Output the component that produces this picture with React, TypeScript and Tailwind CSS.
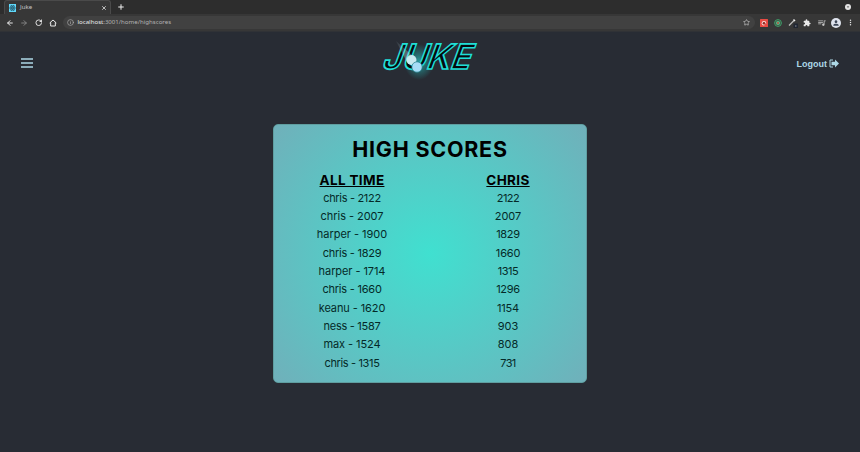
import { ArrowLeft, ArrowRight, Info, Plus, RotateCw, Star, X } from "lucide-react";
import { MdExtension, MdMoreVert, MdQueueMusic, MdPerson, MdArrowDropDown } from "react-icons/md";

type Score = { label: string; tracking: string };

const allTime: Score[] = [
  { label: "chris - 2122", tracking: "tracking-[-0.32px]" },
  { label: "chris - 2007", tracking: "tracking-[-0.05px]" },
  { label: "harper - 1900", tracking: "tracking-[-0.03px]" },
  { label: "chris - 1829", tracking: "tracking-[-0.24px]" },
  { label: "harper - 1714", tracking: "tracking-[-0.08px]" },
  { label: "chris - 1660", tracking: "tracking-[-0.22px]" },
  { label: "keanu - 1620", tracking: "tracking-[-0.1px]" },
  { label: "ness - 1587", tracking: "tracking-[-0.28px]" },
  { label: "max - 1524", tracking: "tracking-[-0.08px]" },
  { label: "chris - 1315", tracking: "tracking-[-0.36px]" },
];

const mine: Score[] = [
  { label: "2122", tracking: "tracking-[-0.5px]" },
  { label: "2007", tracking: "tracking-normal" },
  { label: "1829", tracking: "tracking-[-0.3px]" },
  { label: "1660", tracking: "tracking-[-0.2px]" },
  { label: "1315", tracking: "tracking-[-0.5px]" },
  { label: "1296", tracking: "tracking-[-0.3px]" },
  { label: "1154", tracking: "tracking-[-0.2px]" },
  { label: "903", tracking: "tracking-[-0.1px]" },
  { label: "808", tracking: "tracking-normal" },
  { label: "731", tracking: "tracking-[-0.6px]" },
];

function ReactFavicon() {
  return (
    <svg className="h-[8px] w-[7px] shrink-0" viewBox="0 0 14 16">
      <rect width="14" height="16" fill="#61dafb" />
      <g fill="none" stroke="#24566a" strokeWidth="1.3">
        <ellipse cx="7" cy="8" rx="6" ry="2.4" />
        <ellipse cx="7" cy="8" rx="6" ry="2.4" transform="rotate(60 7 8)" />
        <ellipse cx="7" cy="8" rx="6" ry="2.4" transform="rotate(120 7 8)" />
      </g>
      <circle cx="7" cy="8" r="1.5" fill="#24566a" />
    </svg>
  );
}

function TabStrip() {
  return (
    <div className="flex h-[14px] items-end bg-[#2d2d2d]">
      <div className="ml-[4px] flex h-[14px] w-[107px] items-center rounded-t-[3px] border border-b-0 border-[#4a4a4a] bg-[#373737] pl-[4px] pr-[3px]">
        <ReactFavicon />
        <span className="ml-[4px] flex-1 text-[6.1px] leading-none text-[#c9c9c9]">Juke</span>
        <X className="h-[6px] w-[6px] text-[#e8e8e8]" strokeWidth={3} />
      </div>
      <Plus className="mb-[3px] ml-[6px] h-[8px] w-[8px] text-[#f0f0f0]" strokeWidth={3} />
      <div className="mb-[4px] ml-auto mr-[9px] flex h-[6px] w-[6px] items-center justify-center rounded-full bg-[#e4e4e4]">
        <MdArrowDropDown className="h-[6px] w-[6px] text-[#2d2d2d]" />
      </div>
    </div>
  );
}

function Toolbar() {
  return (
    <div className="flex h-[18px] items-center border-b border-[#303236] bg-[#373737] pl-[6px] pr-[5px] text-[#e8e8e8]">
      <ArrowLeft className="h-[8px] w-[8px]" strokeWidth={3} />
      <ArrowRight className="ml-[6px] h-[8px] w-[8px] text-[#858585]" strokeWidth={2.8} />
      <RotateCw className="ml-[6.5px] h-[7.5px] w-[7.5px]" strokeWidth={3} />
      <svg className="ml-[6.5px] h-[8px] w-[8px]" viewBox="0 0 24 24" fill="none" stroke="currentColor" strokeWidth="3">
        <path d="M2 12 12 3l10 9M5 10v11h14V10" />
      </svg>
      <div className="ml-[6px] flex h-[13px] w-[692px] items-center rounded-full bg-[#414141] pl-[4px] pr-[5px]">
        <Info className="h-[7px] w-[7px] text-[#b0b0b0]" strokeWidth={2.2} />
        <span className="ml-[4px] whitespace-nowrap pb-[0.5px] text-[6.1px] leading-[8px] text-[#b4b4b4]">
          <span className="text-[#ececec]">localhost</span>:3001/home/highscores
        </span>
        <Star className="ml-auto h-[7px] w-[7px] text-[#c4c4c4]" strokeWidth={2.4} />
      </div>
      <svg className="ml-[5px] h-[8px] w-[8px]" viewBox="0 0 16 16">
        <rect width="16" height="16" rx="1" fill="#e84b43" />
        <circle cx="8" cy="8.5" r="4.6" fill="#f6dcda" />
        <circle cx="8" cy="8.5" r="2.6" fill="#8c2822" />
        <path d="M9 9h5v5H9z" fill="#e84b43" />
      </svg>
      <svg className="ml-[6px] h-[8px] w-[8px]" viewBox="0 0 16 16" fill="none" strokeWidth="2">
        <circle cx="8" cy="8" r="6.8" stroke="#3fa36a" />
        <circle cx="8" cy="8" r="3.6" stroke="#58bd88" />
        <circle cx="8" cy="8" r="2" fill="#c8785b" />
      </svg>
      <svg className="ml-[6px] h-[10px] w-[10px]" viewBox="0 0 20 20">
        <path d="M2 15 12 5" stroke="#bdbdbd" strokeWidth="2.3" />
        <path d="m10 4 2-2 3 3-2 2z" fill="#eee" />
        <rect x="11" y="11" width="9" height="9" rx="1" fill="#202632" />
        <path d="M14 16h3" stroke="#b4bac5" strokeWidth="1.5" />
      </svg>
      <MdExtension className="ml-[5px] h-[8px] w-[8px]" />
      <MdQueueMusic className="ml-[6px] h-[9.5px] w-[9.5px] text-[#c6c6c6]" />
      <div className="ml-[5px] flex h-[10px] w-[10px] items-center justify-center rounded-full bg-[#dfe4ee]">
        <MdPerson className="h-[8px] w-[8px] text-[#3c4657]" />
      </div>
      <MdMoreVert className="ml-auto h-[9px] w-[9px]" />
    </div>
  );
}

function JukeLogo() {
  return (
    <svg className="h-[44px] w-[104px] overflow-visible" viewBox="378 38 104 44">
      <defs>
        <radialGradient id="glow">
          <stop offset="0" stopColor="#2fb5b5" stopOpacity=".85" />
          <stop offset=".5" stopColor="#248788" stopOpacity=".6" />
          <stop offset="1" stopColor="#248788" stopOpacity="0" />
        </radialGradient>
        <linearGradient id="trail" x1="0" y1="0" x2="1" y2="1">
          <stop offset="0" stopColor="#c9e9f3" stopOpacity=".1" />
          <stop offset="1" stopColor="#e0f8ff" stopOpacity=".8" />
        </linearGradient>
      </defs>
      <ellipse cx="419" cy="62" rx="15" ry="18" fill="url(#glow)" />
      <g
        transform="translate(381 69) skewX(-20)"
        fontFamily="Inter, 'Liberation Sans', sans-serif"
        fontSize="34.5"
        fontWeight="600"
      >
        <text textLength="88" lengthAdjust="spacingAndGlyphs" fill="#050a0e" stroke="#20ded6" strokeWidth="1.6">JUKE</text>
      </g>
      <path d="m396 41 19 17-7 6z" fill="url(#trail)" opacity=".6" />
      <circle cx="411.500" cy="60" r="5" fill="#c8e9ef" />
      <circle cx="417" cy="67" r="5.2" fill="#a7dcf6" stroke="#237f8b" strokeWidth=".7" />
    </svg>
  );
}

function LogoutIcon() {
  return (
    <svg className="h-[9px] w-[10px]" viewBox="0 0 20 18">
      <path d="M8 2H2v14h6" fill="none" stroke="#add8e6" strokeWidth="2" />
      <path d="M5 5.500h7V1l8 8-8 8v-4.500H5z" fill="#add8e6" />
    </svg>
  );
}

function ScoreColumn({ title, scores }: { title: string; scores: Score[] }) {
  return (
    <section>
      <h2 className="text-[13.5px] font-bold leading-[16px] tracking-[0.35px] underline">{title}</h2>
      <ul className="pt-[0.5px] text-[11px] leading-[18.36px] text-[#042a28]">
        {scores.map((s) => <li key={s.label} className={s.tracking}>{s.label}</li>)}
      </ul>
    </section>
  );
}

export default function App() {
  return (
    <div className="h-[452px] w-[860px] overflow-hidden bg-[#282c34] font-['Noto_Sans',sans-serif]">
      <TabStrip />
      <Toolbar />
      <header className="grid h-[62px] grid-cols-3 items-center px-[21px]">
        <button aria-label="Menu" className="w-[12px]">
          <svg className="block h-[10px] w-[12px]" viewBox="0 0 12 10" stroke="#add8e6" strokeWidth="1.5">
            <path d="M0 1h12M0 5h12M0 9h12" />
          </svg>
        </button>
        <div className="flex justify-center pb-[6px]"><JukeLogo /></div>
        <button className="flex items-center justify-end gap-[2px] pt-px font-['Liberation_Sans',Arial,sans-serif] text-[9px] font-bold leading-[12px] text-[#add8e6]">
          Logout <LogoutIcon />
        </button>
      </header>
      <main className="mx-auto mt-[30px] h-[259px] w-[314px] rounded-[5px] border border-[#5f9ea0] bg-[radial-gradient(circle_at_center,#40e0d0,#70b0ba)] font-['Inter',sans-serif] text-black">
        <h1 className="mt-[11px] text-center text-[21.5px] font-bold leading-[26px] tracking-[0.75px]">HIGH SCORES</h1>
        <div className="mt-[10px] grid grid-cols-2 text-center">
          <ScoreColumn title="ALL TIME" scores={allTime} />
          <ScoreColumn title="CHRIS" scores={mine} />
        </div>
      </main>
    </div>
  );
}
